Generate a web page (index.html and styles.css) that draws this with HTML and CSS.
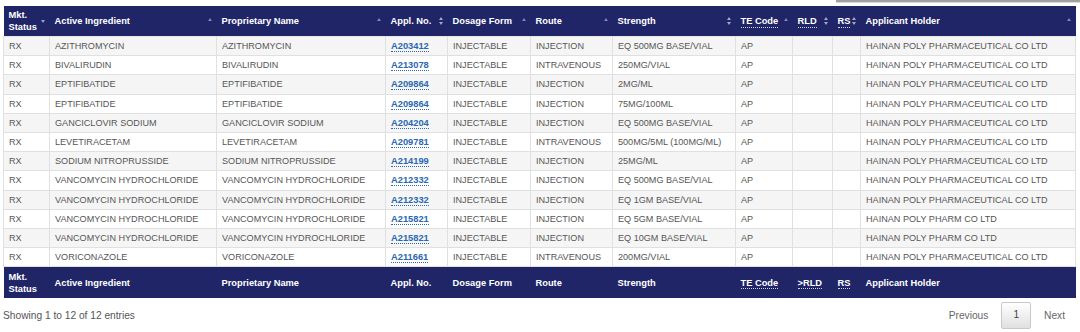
FILE: index.html
```html
<!DOCTYPE html>
<html>
<head>
<meta charset="utf-8">
<link rel="stylesheet" href="styles.css">
</head>
<body>
<div class="topbar"><div class="searchline"></div></div>
<table class="grid">
<colgroup>
<col style="width:46px"><col style="width:167px"><col style="width:169px"><col style="width:62px"><col style="width:83px"><col style="width:82px"><col style="width:123px"><col style="width:57px"><col style="width:40px"><col style="width:28px"><col style="width:215px">
</colgroup>
<thead>
<tr>
<th><div class="hc"><span>Mkt.<br>Status</span><i class="s desc"></i></div></th>
<th><div class="hc"><span>Active Ingredient</span><i class="s up"></i></div></th>
<th><div class="hc"><span>Proprietary Name</span><i class="s up"></i></div></th>
<th><div class="hc"><span>Appl. No.</span><i class="s both"></i></div></th>
<th><div class="hc"><span>Dosage Form</span><i class="s up"></i></div></th>
<th><div class="hc"><span>Route</span><i class="s up"></i></div></th>
<th><div class="hc"><span>Strength</span><i class="s both"></i></div></th>
<th><div class="hc"><span class="abbr">TE Code</span><i class="s up"></i></div></th>
<th><div class="hc"><span class="abbr">RLD</span><i class="s both"></i></div></th>
<th><div class="hc"><span class="abbr">RS</span><i class="s both"></i></div></th>
<th><div class="hc"><span>Applicant Holder</span><i class="s up"></i></div></th>
</tr>
</thead>
<tbody>
<tr><td>RX</td><td>AZITHROMYCIN</td><td>AZITHROMYCIN</td><td><a>A203412</a></td><td>INJECTABLE</td><td>INJECTION</td><td>EQ 500MG BASE/VIAL</td><td>AP</td><td></td><td></td><td>HAINAN POLY PHARMACEUTICAL CO LTD</td></tr>
<tr><td>RX</td><td>BIVALIRUDIN</td><td>BIVALIRUDIN</td><td><a>A213078</a></td><td>INJECTABLE</td><td>INTRAVENOUS</td><td>250MG/VIAL</td><td>AP</td><td></td><td></td><td>HAINAN POLY PHARMACEUTICAL CO LTD</td></tr>
<tr><td>RX</td><td>EPTIFIBATIDE</td><td>EPTIFIBATIDE</td><td><a>A209864</a></td><td>INJECTABLE</td><td>INJECTION</td><td>2MG/ML</td><td>AP</td><td></td><td></td><td>HAINAN POLY PHARMACEUTICAL CO LTD</td></tr>
<tr><td>RX</td><td>EPTIFIBATIDE</td><td>EPTIFIBATIDE</td><td><a>A209864</a></td><td>INJECTABLE</td><td>INJECTION</td><td>75MG/100ML</td><td>AP</td><td></td><td></td><td>HAINAN POLY PHARMACEUTICAL CO LTD</td></tr>
<tr><td>RX</td><td>GANCICLOVIR SODIUM</td><td>GANCICLOVIR SODIUM</td><td><a>A204204</a></td><td>INJECTABLE</td><td>INJECTION</td><td>EQ 500MG BASE/VIAL</td><td>AP</td><td></td><td></td><td>HAINAN POLY PHARMACEUTICAL CO LTD</td></tr>
<tr><td>RX</td><td>LEVETIRACETAM</td><td>LEVETIRACETAM</td><td><a>A209781</a></td><td>INJECTABLE</td><td>INTRAVENOUS</td><td>500MG/5ML (100MG/ML)</td><td>AP</td><td></td><td></td><td>HAINAN POLY PHARMACEUTICAL CO LTD</td></tr>
<tr><td>RX</td><td>SODIUM NITROPRUSSIDE</td><td>SODIUM NITROPRUSSIDE</td><td><a>A214199</a></td><td>INJECTABLE</td><td>INJECTION</td><td>25MG/ML</td><td>AP</td><td></td><td></td><td>HAINAN POLY PHARMACEUTICAL CO LTD</td></tr>
<tr><td>RX</td><td>VANCOMYCIN HYDROCHLORIDE</td><td>VANCOMYCIN HYDROCHLORIDE</td><td><a>A212332</a></td><td>INJECTABLE</td><td>INJECTION</td><td>EQ 500MG BASE/VIAL</td><td>AP</td><td></td><td></td><td>HAINAN POLY PHARMACEUTICAL CO LTD</td></tr>
<tr><td>RX</td><td>VANCOMYCIN HYDROCHLORIDE</td><td>VANCOMYCIN HYDROCHLORIDE</td><td><a>A212332</a></td><td>INJECTABLE</td><td>INJECTION</td><td>EQ 1GM BASE/VIAL</td><td>AP</td><td></td><td></td><td>HAINAN POLY PHARMACEUTICAL CO LTD</td></tr>
<tr><td>RX</td><td>VANCOMYCIN HYDROCHLORIDE</td><td>VANCOMYCIN HYDROCHLORIDE</td><td><a>A215821</a></td><td>INJECTABLE</td><td>INJECTION</td><td>EQ 5GM BASE/VIAL</td><td>AP</td><td></td><td></td><td>HAINAN POLY PHARM CO LTD</td></tr>
<tr><td>RX</td><td>VANCOMYCIN HYDROCHLORIDE</td><td>VANCOMYCIN HYDROCHLORIDE</td><td><a>A215821</a></td><td>INJECTABLE</td><td>INJECTION</td><td>EQ 10GM BASE/VIAL</td><td>AP</td><td></td><td></td><td>HAINAN POLY PHARM CO LTD</td></tr>
<tr><td>RX</td><td>VORICONAZOLE</td><td>VORICONAZOLE</td><td><a>A211661</a></td><td>INJECTABLE</td><td>INTRAVENOUS</td><td>200MG/VIAL</td><td>AP</td><td></td><td></td><td>HAINAN POLY PHARMACEUTICAL CO LTD</td></tr>
</tbody>
<tfoot>
<tr>
<th>Mkt.<br>Status</th>
<th>Active Ingredient</th>
<th>Proprietary Name</th>
<th>Appl. No.</th>
<th>Dosage Form</th>
<th>Route</th>
<th>Strength</th>
<th><span class="abbr">TE Code</span></th>
<th><span class="abbr">&gt;RLD</span></th>
<th><span class="abbr">RS</span></th>
<th>Applicant Holder</th>
</tr>
</tfoot>
</table>
<div class="bottom">
<div class="info">Showing 1 to 12 of 12 entries</div>
<div class="pager">
<span class="pbtn">Previous</span>
<span class="pbtn current">1</span>
<span class="pbtn">Next</span>
</div>
</div>
</body>
</html>
```

FILE: styles.css
```css
html, body {
  margin: 0;
  padding: 0;
  background: #fff;
  font-family: "Liberation Sans", Arial, sans-serif;
}
.topbar {
  height: 6px;
  display: flex;
  justify-content: flex-end;
}
.searchline {
  width: 244px;
  height: 2px;
  background: #a0a0a0;
  border-bottom: 1px solid #dadada;
}
.grid {
  margin-left: 3px;
  width: 1072px;
  table-layout: fixed;
  border-collapse: collapse;
  font-size: 9.1px;
}
.grid th {
  background: #1f2566;
  color: #fff;
  font-weight: bold;
  text-align: left;
  font-size: 9.3px;
  line-height: 12px;
  padding: 3px 5px 3px 5px;
  height: 24px;
  vertical-align: middle;
  white-space: nowrap;
}
.grid thead th {
  padding-right: 3px;
}
.hc {
  display: flex;
  align-items: center;
  justify-content: space-between;
}
.abbr {
  border-bottom: 1px dotted #cfd3ea;
}
.s {
  display: block;
  width: 7px;
  height: 10px;
  flex: none;
  position: relative;
}
.s.up::before, .s.both::before, .s.desc::after, .s.both::after {
  content: "";
  position: absolute;
  left: 1px;
  border-left: 2.5px solid transparent;
  border-right: 2.5px solid transparent;
}
.s.up::before {
  top: 2px;
  border-bottom: 3.5px solid #7c84b3;
}
.s.both::before {
  top: 0.5px;
  border-bottom: 3.5px solid #a2a8cc;
}
.s.both::after {
  top: 5.5px;
  border-top: 3.5px solid #a2a8cc;
}
.s.desc::after {
  top: 4px;
  border-top: 3.5px solid #8ea3d8;
}
.grid td {
  color: #555;
  height: 18.2px;
  padding: 0 5px;
  line-height: 12px;
  border: 1px solid #e0e0e0;
  border-top: 1px solid #e6e6e6;
  white-space: nowrap;
  overflow: hidden;
}
.grid tbody tr:nth-child(odd) td {
  background: #f5f5f5;
}
.grid td a {
  color: #2a68b0;
  font-weight: bold;
  font-size: 9.3px;
  border-bottom: 1px dotted #2a68b0;
}
.grid tfoot th {
  height: 25px;
}
.bottom {
  display: flex;
  justify-content: space-between;
  align-items: center;
  padding: 4px 4px 0 3px;
}
.info {
  color: #555;
  font-size: 10.2px;
}
.pager {
  display: flex;
  align-items: center;
  gap: 2px;
}
.pbtn {
  color: #666;
  font-size: 10.2px;
  padding: 6px 11px;
  line-height: 12px;
}
.pbtn.current {
  color: #444;
  border: 1px solid #c9c9c9;
  border-radius: 2px;
  background: linear-gradient(#ffffff, #e0e0e0);
  padding: 6px 11px 7px;
}
```
